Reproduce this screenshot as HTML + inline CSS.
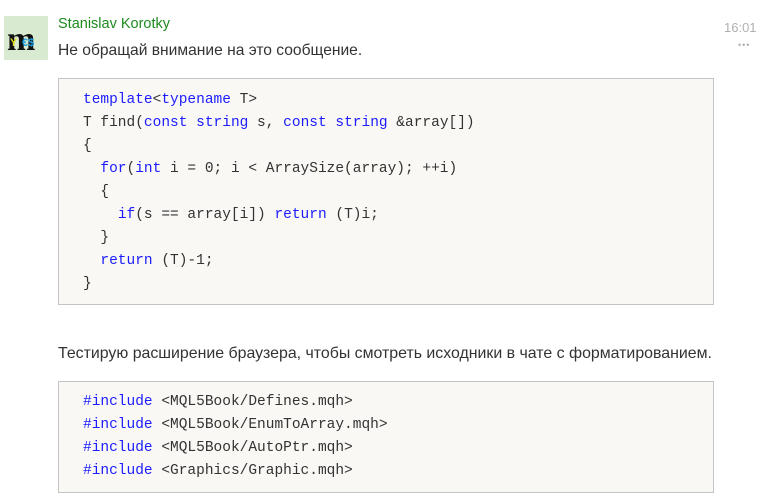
<!DOCTYPE html>
<html><head><meta charset="utf-8"><style>
body{margin:0;width:760px;height:500px;background:#fff;position:relative;overflow:hidden;font-family:"Liberation Sans",sans-serif;}
.av{position:absolute;left:4px;top:16px;width:44px;height:44px;background:#d8ead0;}
.name{position:absolute;left:58px;top:16px;font-size:14.5px;color:#1e8a1e;}
.msg{position:absolute;left:58px;font-size:15.6px;color:#333;white-space:nowrap;}
.time{position:absolute;left:724px;top:20px;font-size:13px;color:#b0b0b0;}
.dots{position:absolute;left:738px;top:40px;font-size:9px;color:#b0b0b0;letter-spacing:1px;}
.code{position:absolute;left:58px;width:654px;background:#f9f8f5;border:1px solid #c4c4c4;}
.code pre{margin:0;position:absolute;left:24px;font-family:"Liberation Mono",monospace;font-size:14.5px;line-height:23px;color:#333;}
.k{color:#1c1cff;}
</style></head><body>
<div class="av"><svg width="44" height="44"><text x="3" y="34" font-family="Liberation Serif" font-size="34" font-weight="bold" fill="#111">m</text><text x="6" y="30" font-size="11" fill="#e0e020" font-weight="bold">Y</text><text x="18" y="30" font-size="11" fill="#20a0e0" font-weight="bold">€$</text></svg></div>
<div class="name">Stanislav Korotky</div>
<div class="time">16:01</div>
<div class="dots">•••</div>
<div class="msg" style="top:42px">Не обращай внимание на это сообщение.</div>
<div class="code" style="top:78px;height:225px"><pre style="top:10px"><span class="k">template</span>&lt;<span class="k">typename</span> T&gt;
T find(<span class="k">const</span> <span class="k">string</span> s, <span class="k">const</span> <span class="k">string</span> &amp;array[])
{
  <span class="k">for</span>(<span class="k">int</span> i = 0; i &lt; ArraySize(array); ++i)
  {
    <span class="k">if</span>(s == array[i]) <span class="k">return</span> (T)i;
  }
  <span class="k">return</span> (T)-1;
}</pre></div>
<div class="msg" style="top:345px;font-size:15.9px">Тестирую расширение браузера, чтобы смотреть исходники в чате с форматированием.</div>
<div class="code" style="top:381px;height:110px"><pre style="top:9px"><span class="k">#include</span> &lt;MQL5Book/Defines.mqh&gt;
<span class="k">#include</span> &lt;MQL5Book/EnumToArray.mqh&gt;
<span class="k">#include</span> &lt;MQL5Book/AutoPtr.mqh&gt;
<span class="k">#include</span> &lt;Graphics/Graphic.mqh&gt;</pre></div>
</body></html>
